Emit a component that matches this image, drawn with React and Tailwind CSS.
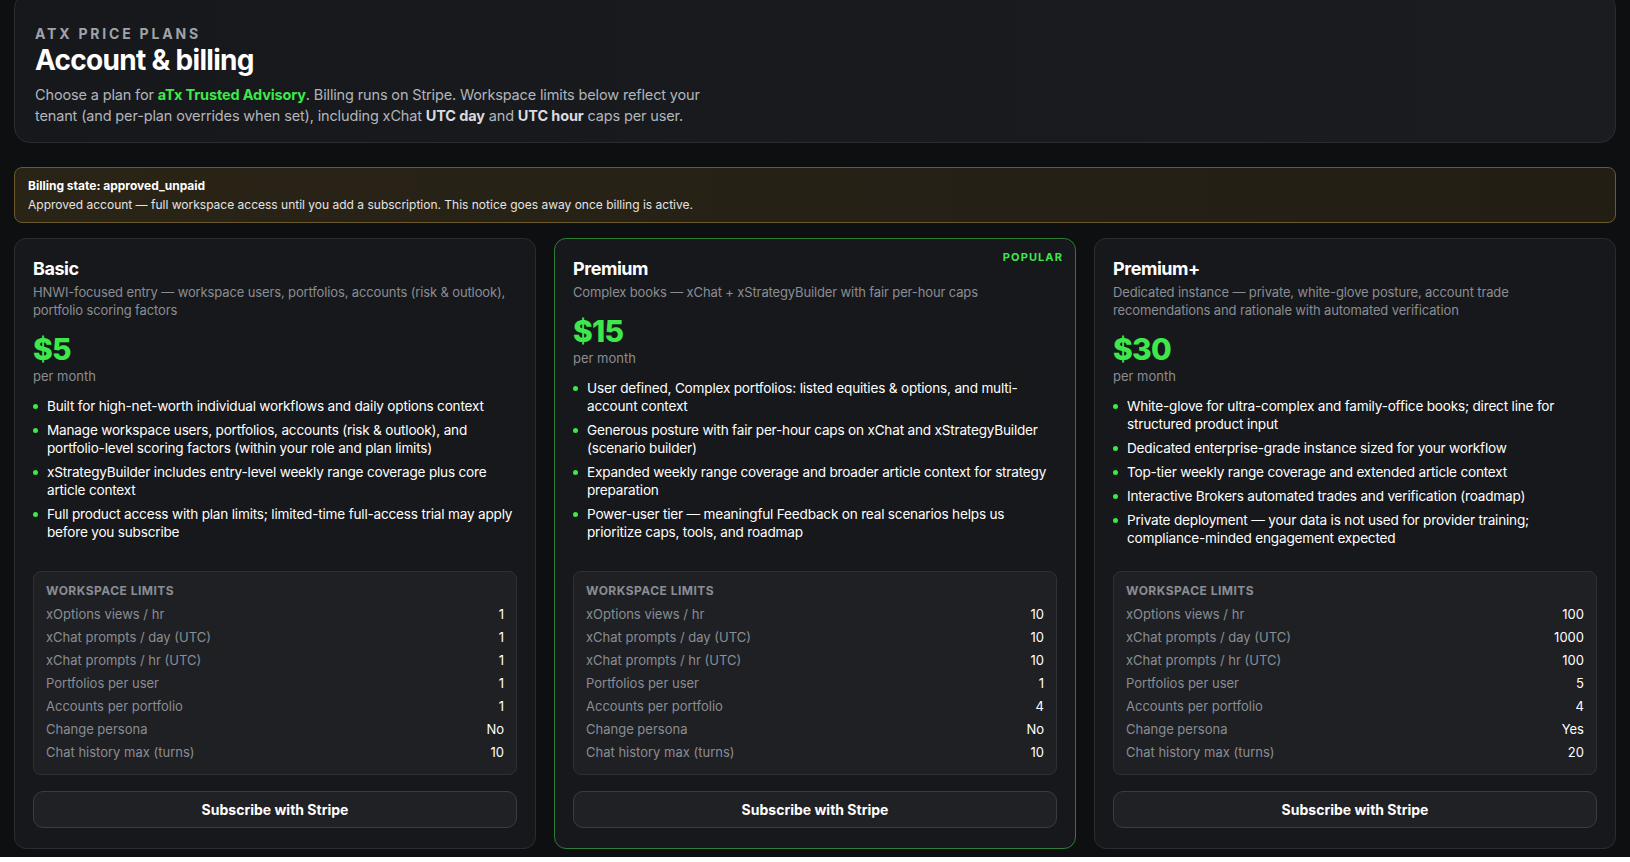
import React from 'react';

const plans = [
  {
    name: 'Basic',
    desc: 'HNWI-focused entry — workspace users, portfolios, accounts (risk & outlook), portfolio scoring factors',
    price: '$5',
    bullets: [
      'Built for high-net-worth individual workflows and daily options context',
      'Manage workspace users, portfolios, accounts (risk & outlook), and portfolio-level scoring factors (within your role and plan limits)',
      'xStrategyBuilder includes entry-level weekly range coverage plus core article context',
      'Full product access with plan limits; limited-time full-access trial may apply before you subscribe',
    ],
    limits: ['1', '1', '1', '1', '1', 'No', '10'],
  },
  {
    name: 'Premium',
    popular: true,
    desc: 'Complex books — xChat + xStrategyBuilder with fair per-hour caps',
    price: '$15',
    bullets: [
      'User defined, Complex portfolios: listed equities & options, and multi-account context',
      'Generous posture with fair per-hour caps on xChat and xStrategyBuilder (scenario builder)',
      'Expanded weekly range coverage and broader article context for strategy preparation',
      'Power-user tier — meaningful Feedback on real scenarios helps us prioritize caps, tools, and roadmap',
    ],
    limits: ['10', '10', '10', '1', '4', 'No', '10'],
  },
  {
    name: 'Premium+',
    desc: 'Dedicated instance — private, white-glove posture, account trade recomendations and rationale with automated verification',
    price: '$30',
    bullets: [
      'White-glove for ultra-complex and family-office books; direct line for structured product input',
      'Dedicated enterprise-grade instance sized for your workflow',
      'Top-tier weekly range coverage and extended article context',
      'Interactive Brokers automated trades and verification (roadmap)',
      'Private deployment — your data is not used for provider training; compliance-minded engagement expected',
    ],
    limits: ['100', '1000', '100', '5', '4', 'Yes', '20'],
  },
];

const limitLabels = [
  'xOptions views / hr',
  'xChat prompts / day (UTC)',
  'xChat prompts / hr (UTC)',
  'Portfolios per user',
  'Accounts per portfolio',
  'Change persona',
  'Chat history max (turns)',
];

const PlanCard = ({ plan }) => (
  <div
    className={`relative flex flex-col rounded-xl border bg-[#17181b] px-[18px] pt-[18px] pb-[20px] ${
      plan.popular ? 'border-[#2e7d36]' : 'border-[#2a2c30]'
    }`}
  >
    {plan.popular && (
      <span className="absolute right-[12px] top-[10px] text-[11px] font-bold tracking-[0.1em] text-[#3ee84a]">POPULAR</span>
    )}
    <h2 className="text-[18px] font-bold text-white leading-6 tracking-tight">{plan.name}</h2>
    <p className="mt-[2px] text-[13px] leading-[18px] tracking-[-0.01em] text-[#8a8d93]">{plan.desc}</p>
    <div className="mt-[12px] text-[30px] font-extrabold leading-9 tracking-tight text-[#3ee84a]">{plan.price}</div>
    <div className="text-[13px] text-[#8a8d93]">per month</div>
    <ul className="mt-[10px] flex flex-col gap-[6px]">
      {plan.bullets.map((b) => (
        <li key={b} className="flex gap-[9px] text-[13.6px] leading-[18px] tracking-[-0.015em] text-white">
          <span className="mt-[7px] h-[5px] w-[5px] shrink-0 rounded-full bg-[#3ee84a]" />
          <span>{b}</span>
        </li>
      ))}
    </ul>
    <div className="mt-auto pt-[24px]">
      <div className="rounded-lg border border-[#2e3034] bg-[#1f2024] px-[12px] py-[10px]">
        <div className="text-[12px] font-bold tracking-[0.04em] text-[#8a8d93]">WORKSPACE LIMITS</div>
        <div className="mt-[3px] flex flex-col">
          {limitLabels.map((l, i) => (
            <div key={l} className="flex justify-between text-[13px] leading-[23px]">
              <span className="text-[#8a8d93]">{l}</span>
              <span className="text-white">{plan.limits[i]}</span>
            </div>
          ))}
        </div>
      </div>
      <button className="mt-[16px] h-[37px] w-full rounded-[10px] border border-[#3a3c41] bg-[#202124] text-[14px] font-bold text-white">
        Subscribe with Stripe
      </button>
    </div>
  </div>
);

export default function App() {
  return (
    <div
      className="min-h-screen bg-[#0e0f11] px-[14px] pb-[8px] text-white"
      style={{ fontFamily: 'Inter, "Noto Sans", sans-serif' }}
    >
      <div className="-mt-[8px] rounded-[16px] border border-[#2a2c30] bg-gradient-to-r from-[#17181b] to-[#1b1c1f] px-[20px] pt-[30px] pb-[16px]">
        <div className="text-[14px] font-bold tracking-[0.2em] text-[#a0a3a9]">ATX PRICE PLANS</div>
        <h1 className="text-[28px] font-bold leading-8 tracking-tight text-white">Account &amp; billing</h1>
        <p className="mt-[8px] text-[14.5px] leading-[21px] tracking-[-0.01em] text-[#b2b5ba]">
          Choose a plan for <span className="font-bold text-[#3ee84a]">aTx Trusted Advisory</span>. Billing runs on Stripe. Workspace limits below reflect your
          <br />
          tenant (and per-plan overrides when set), including xChat <b className="text-[#d9dbde]">UTC day</b> and{' '}
          <b className="text-[#d9dbde]">UTC hour</b> caps per user.
        </p>
      </div>

      <div className="mt-[24px] rounded-lg border border-[#6b5a2e] bg-gradient-to-r from-[#2a2417] to-[#221e14] px-[13px] py-[8px] text-[12px] leading-[19px]">
        <div className="font-bold text-white">Billing state: approved_unpaid</div>
        <div className="text-[#e4e4e4]">
          Approved account — full workspace access until you add a subscription. This notice goes away once billing is active.
        </div>
      </div>

      <div className="mt-[15px] grid grid-cols-3 gap-[18px]">
        {plans.map((p) => (
          <PlanCard key={p.name} plan={p} />
        ))}
      </div>
    </div>
  );
}
